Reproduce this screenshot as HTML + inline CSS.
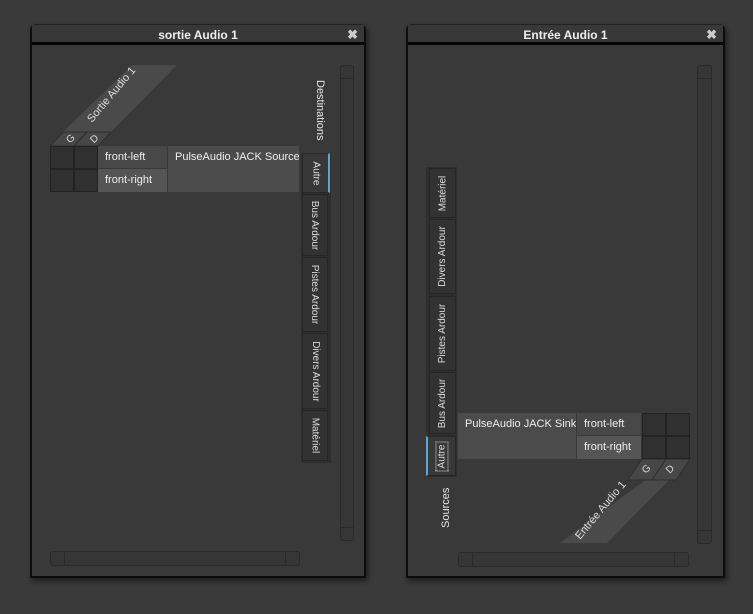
<!DOCTYPE html>
<html><head><meta charset="utf-8"><style>
*{margin:0;padding:0;box-sizing:border-box}
body{width:753px;height:614px;background:#3a3a3a;position:relative;overflow:hidden;font-family:"Liberation Sans",sans-serif;color:#e6e6e6}
.a{position:absolute}
.win{position:absolute;background:#393939;border:2px solid #0c0c0c;border-top:1px solid #222;border-radius:6px 6px 0 0;box-shadow:2px 3px 6px rgba(0,0,0,.5)}
.tb{position:absolute;left:0;right:0;top:0;height:20px;background:#383838;border-bottom:3px solid #050505;font-size:12px;font-weight:bold;text-align:center;line-height:20px;color:#eee}
.x{position:absolute;right:6px;top:0;font-size:13px;color:#ccc}
.cell{position:absolute;background:#303030;border:1px solid #222}
.lab{position:absolute;font-size:11px;padding-left:7px;line-height:22px;color:#eee;white-space:nowrap;overflow:hidden}
.vs{position:absolute;border:1px solid #2a2a2a;border-radius:3px;background:#363636}
.tab{position:absolute;background:#323232;border:1px solid #262626;font-size:10px;color:#ddd;display:flex;align-items:center;justify-content:center}
.tab span{white-space:nowrap}
.r span{transform:rotate(90deg)}
.l span{transform:rotate(-90deg)}
</style></head><body>

<div class="win" style="left:30px;top:24px;width:336px;height:554px">
 <div class="tb">sortie Audio 1<span class="x">✖</span></div>
</div>
<div class="win" style="left:406px;top:24px;width:319px;height:554px">
 <div class="tb">Entrée Audio 1<span class="x">✖</span></div>
</div>
<svg class="a" style="left:0;top:0" width="753" height="614">
 <polygon points="63,132 111,132 177,65 132,65" fill="#4a4a4a"/>
 <polygon points="50,146 74,146 87,132 63,132" fill="#474747" stroke="#2e2e2e"/>
 <polygon points="74,146 98,146 111,132 87,132" fill="#474747" stroke="#2e2e2e"/>
 <text x="0" y="0" font-size="11" fill="#ddd" font-family="Liberation Sans" transform="translate(92,123) rotate(-50)">Sortie Audio 1</text>
 <text x="66" y="142" font-size="10" fill="#ddd" font-family="Liberation Sans" transform="rotate(-45 70 138)">G</text>
 <text x="90" y="142" font-size="10" fill="#ddd" font-family="Liberation Sans" transform="rotate(-45 94 138)">D</text>

 <polygon points="676,473 655,473 560,543 607,543" fill="#4a4a4a"/>
 <polygon points="642,459 666,459 652,480 628,480" fill="#474747" stroke="#2e2e2e"/>
 <polygon points="666,459 690,459 676,480 652,480" fill="#474747" stroke="#2e2e2e"/>
 <text x="0" y="0" font-size="11" fill="#ddd" font-family="Liberation Sans" transform="translate(580,540) rotate(-50)">Entrée Audio 1</text>
 <text x="642" y="473" font-size="10" fill="#ddd" font-family="Liberation Sans" transform="rotate(-45 645 469)">G</text>
 <text x="666" y="473" font-size="10" fill="#ddd" font-family="Liberation Sans" transform="rotate(-45 669 469)">D</text>
</svg>
<div class="cell" style="left:50px;top:146px;width:24px;height:23px"></div>
<div class="cell" style="left:74px;top:146px;width:24px;height:23px"></div>
<div class="cell" style="left:50px;top:169px;width:24px;height:23px"></div>
<div class="cell" style="left:74px;top:169px;width:24px;height:23px"></div>
<div class="lab" style="left:98px;top:146px;width:69px;height:22px;background:#484848">front-left</div>
<div class="lab" style="left:98px;top:169px;width:69px;height:23px;background:#555">front-right</div>
<div class="lab" style="left:168px;top:146px;width:131px;height:46px;background:#4b4b4b">PulseAudio JACK Source</div>
<div class="a" style="left:301px;top:153px;width:30px;height:310px;background:#2e2e2e"></div>
<div class="tab r" style="left:302px;top:153px;width:28px;height:40px;background:#383838;border-right:2px solid #5fa6d0"><span>Autre</span></div>
<div class="tab r" style="left:302px;top:194px;width:26px;height:62px"><span>Bus Ardour</span></div>
<div class="tab r" style="left:302px;top:257px;width:26px;height:75px"><span>Pistes Ardour</span></div>
<div class="tab r" style="left:302px;top:333px;width:26px;height:76px"><span>Divers Ardour</span></div>
<div class="tab r" style="left:302px;top:410px;width:26px;height:51px"><span>Matériel</span></div>
<div class="a" style="left:312px;top:80px;font-size:11px;transform-origin:0 0;transform:translate(14px,0) rotate(90deg);white-space:nowrap">Destinations</div>
<div class="vs" style="left:340px;top:65px;width:14px;height:476px"><div class="a" style="left:0;right:0;top:12px;border-top:1px solid #2a2a2a"></div><div class="a" style="left:0;right:0;bottom:12px;border-top:1px solid #2a2a2a"></div></div>
<div class="vs" style="left:50px;top:551px;width:250px;height:15px"><div class="a" style="left:13px;top:0;bottom:0;border-left:1px solid #2a2a2a"></div><div class="a" style="right:13px;top:0;bottom:0;border-left:1px solid #2a2a2a"></div></div>

<div class="lab" style="left:458px;top:413px;width:118px;height:46px;background:#4b4b4b">PulseAudio JACK Sink</div>
<div class="lab" style="left:577px;top:413px;width:64px;height:22px;background:#484848">front-left</div>
<div class="lab" style="left:577px;top:436px;width:64px;height:23px;background:#555">front-right</div>
<div class="cell" style="left:642px;top:413px;width:24px;height:23px"></div>
<div class="cell" style="left:666px;top:413px;width:24px;height:23px"></div>
<div class="cell" style="left:642px;top:436px;width:24px;height:23px"></div>
<div class="cell" style="left:666px;top:436px;width:24px;height:23px"></div>
<div class="a" style="left:426px;top:167px;width:31px;height:310px;background:#2e2e2e"></div>
<div class="tab l" style="left:429px;top:168px;width:27px;height:50px"><span>Matériel</span></div>
<div class="tab l" style="left:429px;top:219px;width:27px;height:75px"><span>Divers Ardour</span></div>
<div class="tab l" style="left:429px;top:296px;width:27px;height:75px"><span>Pistes Ardour</span></div>
<div class="tab l" style="left:429px;top:372px;width:27px;height:62px"><span>Bus Ardour</span></div>
<div class="tab l" style="left:426px;top:436px;width:30px;height:40px;background:#383838;border-left:2px solid #5fa6d0"><span style="outline:1px dotted #ddd;padding:0 2px">Autre</span></div>
<div class="a" style="left:440px;top:528px;font-size:11px;transform-origin:0 0;transform:rotate(-90deg);white-space:nowrap">Sources</div>
<div class="vs" style="left:697px;top:65px;width:15px;height:479px"><div class="a" style="left:0;right:0;top:12px;border-top:1px solid #2a2a2a"></div><div class="a" style="left:0;right:0;bottom:12px;border-top:1px solid #2a2a2a"></div></div>
<div class="vs" style="left:458px;top:552px;width:231px;height:15px"><div class="a" style="left:13px;top:0;bottom:0;border-left:1px solid #2a2a2a"></div><div class="a" style="right:13px;top:0;bottom:0;border-left:1px solid #2a2a2a"></div></div>
</body></html>
